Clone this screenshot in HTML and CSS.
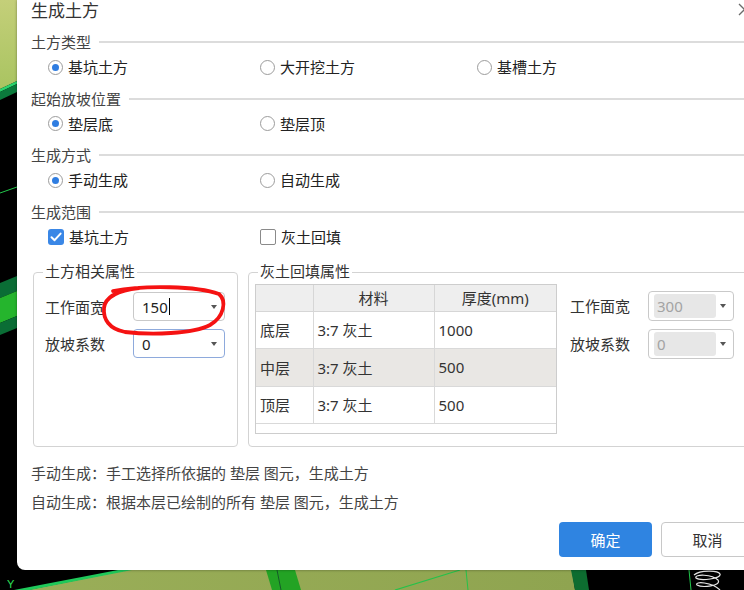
FILE: index.html
```html
<!DOCTYPE html>
<html lang="zh-CN">
<head>
    <meta charset="UTF-8">
    <meta name="viewport" content="width=device-width, initial-scale=1.0">
    <title>生成土方</title>
    <link rel="stylesheet" href="styles.css">
</head>
<body>
<div class="desktop">
    <!-- CAD scene behind the dialog -->
    <svg class="backdrop" width="744" height="590" viewBox="0 0 744 590">
        <defs>
            <linearGradient id="lime" x1="0" y1="0" x2="0" y2="1">
                <stop offset="0" stop-color="#c4cf79"/>
                <stop offset="1" stop-color="#a9c461"/>
            </linearGradient>
            <linearGradient id="olive" x1="0" y1="0" x2="1" y2="0">
                <stop offset="0" stop-color="#9aae58"/>
                <stop offset="1" stop-color="#8fa450"/>
            </linearGradient>
        </defs>
        <rect width="744" height="590" fill="#000"/>
        <polygon points="0,0 17,0 17,81 0,89" fill="url(#lime)"/>
        <polygon points="0,89 17,81 17,84 0,92" fill="#2ad36c"/>
        <polygon points="0,92 17,84 17,92 0,100" fill="#0b7a3c"/>
        <line x1="0" y1="193" x2="17" y2="187" stroke="#22c84c" stroke-width="1"/>
        <polygon points="0,283 17,276 17,291 0,298" fill="#0a6d35"/>
        <polygon points="0,298 17,291 17,316 0,323" fill="#25b52d"/>
        <polygon points="0,323 17,316 17,328 0,335" fill="#0a6d35"/>
        <polygon points="28,590 128,570 572,570 575,590" fill="url(#olive)"/>
        <polygon points="14,590 118,570 132,570 30,590" fill="#1fc95a"/>
        <polygon points="266,570 295,570 301,590 272,590" fill="#23a324"/>
        <line x1="277" y1="570" x2="281" y2="590" stroke="#145a2a" stroke-width="1"/>
        <line x1="395" y1="590" x2="460" y2="570" stroke="#24c24a" stroke-width="1.2"/>
        <line x1="466" y1="570" x2="468" y2="590" stroke="#24c24a" stroke-width="1"/>
        <polygon points="571,570 586,570 589,590 575,590" fill="#0d6d30"/>
        <line x1="689" y1="570" x2="691" y2="590" stroke="#22c84c" stroke-width="1"/>
        <path d="M694 575 C700 570, 718 570, 720 574 C722 579, 700 581, 696 578 C694 574, 712 574, 718 580 C722 586, 702 588, 697 585 C694 581, 712 582, 720 590" fill="none" stroke="#e6e6e6" stroke-width="1.2"/>
        <text x="7" y="588" fill="#2ee05a" font-size="11" font-family="Liberation Sans, sans-serif">Y</text>
    </svg>

    <div class="dialog">
        <div class="title-row">
            <span class="title">生成土方</span>
            <span class="close">
                <svg width="13" height="13" viewBox="0 0 13 13">
                    <path d="M1 1 L12 12 M1 12 L12 1" stroke="#6a6a6a" stroke-width="1.3" fill="none"/>
                </svg>
            </span>
        </div>

        <div class="section first">
            <div class="section-head"><span>土方类型</span></div>
            <div class="options">
                <label class="opt"><span class="radio on"></span>基坑土方</label>
                <label class="opt"><span class="radio"></span>大开挖土方</label>
                <label class="opt"><span class="radio"></span>基槽土方</label>
            </div>
        </div>

        <div class="section">
            <div class="section-head"><span>起始放坡位置</span></div>
            <div class="options">
                <label class="opt"><span class="radio on"></span>垫层底</label>
                <label class="opt"><span class="radio"></span>垫层顶</label>
            </div>
        </div>

        <div class="section">
            <div class="section-head"><span>生成方式</span></div>
            <div class="options">
                <label class="opt"><span class="radio on"></span>手动生成</label>
                <label class="opt"><span class="radio"></span>自动生成</label>
            </div>
        </div>

        <div class="section">
            <div class="section-head"><span>生成范围</span></div>
            <div class="options">
                <label class="opt">
                    <span class="check on">
                        <svg width="16" height="16" viewBox="0 0 16 16">
                            <path d="M3.5 8.2 L6.6 11.2 L12.6 4.6" stroke="#fff" stroke-width="2" fill="none" stroke-linecap="round" stroke-linejoin="round"/>
                        </svg>
                    </span>基坑土方
                </label>
                <label class="opt"><span class="check"></span>灰土回填</label>
            </div>
        </div>

        <div class="groups">
            <div class="group left">
                <div class="group-title">土方相关属性</div>
                <div class="field">
                    <span class="field-label">工作面宽</span>
                    <div class="combo">150<span class="caret"></span><span class="arrow"></span></div>
                </div>
                <div class="field second">
                    <span class="field-label">放坡系数</span>
                    <div class="combo focus">0<span class="arrow"></span></div>
                </div>
                <!-- red hand-drawn mark over the first input -->
                <svg class="mark" width="205" height="175" viewBox="0 0 205 175">
                    <path d="M80 19 C112 13, 164 14, 186 22 C194 29, 191 45, 177 53 C160 62, 118 63, 92 60 C76 57, 70 47, 71 36 C72 26, 81 19, 106 16" fill="none" stroke="#f51212" stroke-width="3.8" stroke-linecap="round"/>
                </svg>
            </div>

            <div class="group right">
                <div class="group-title">灰土回填属性</div>
                <div class="fill-body">
                    <div class="grid-box">
                        <table class="grid">
                            <tr>
                                <th class="c1"></th>
                                <th class="c2">材料</th>
                                <th>厚度(mm)</th>
                            </tr>
                            <tr>
                                <td>底层</td>
                                <td>3:7 灰土</td>
                                <td>1000</td>
                            </tr>
                            <tr class="shade">
                                <td>中层</td>
                                <td>3:7 灰土</td>
                                <td>500</td>
                            </tr>
                            <tr>
                                <td>顶层</td>
                                <td>3:7 灰土</td>
                                <td>500</td>
                            </tr>
                        </table>
                    </div>
                    <div class="side">
                        <div class="field">
                            <span class="field-label small">工作面宽</span>
                            <div class="combo disabled"><span class="value">300</span><span class="arrow"></span></div>
                        </div>
                        <div class="field second">
                            <span class="field-label small">放坡系数</span>
                            <div class="combo disabled"><span class="value">0</span><span class="arrow"></span></div>
                        </div>
                    </div>
                </div>
            </div>
        </div>

        <p class="note">手动生成：手工选择所依据的 垫层 图元，生成土方</p>
        <p class="note second">自动生成：根据本层已绘制的所有 垫层 图元，生成土方</p>

        <div class="buttons">
            <button class="btn ok">确定</button>
            <button class="btn cancel">取消</button>
        </div>
    </div>
</div>
</body>
</html>
```

FILE: styles.css
```css
* {
    margin: 0px;
    padding: 0px;
    box-sizing: border-box;
}

body {
    font-family: "Noto Sans", "Noto Sans CJK SC", sans-serif;
    color: #333;
    overflow: hidden;
}

.desktop {
    position: relative;
    width: 744px;
    height: 590px;
    overflow: hidden;
    background-color: #000;
}

.backdrop {
    position: absolute;
    left: 0;
    top: 0;
}

/* Dialog */

.dialog {
    position: relative;
    margin-left: 17px;
    width: 727px;
    height: 570px;
    padding-left: 14px;
    background-color: #fff;
    border-bottom-left-radius: 8px;
    box-shadow: 0 0 3px rgba(0, 0, 0, 0.4);
    overflow: hidden;
}

.title-row {
    display: flex;
    align-items: center;
    height: 21px;
}

.title {
    font-size: 17px;
    line-height: 21px;
    color: #333;
}

.close {
    margin-left: auto;
    width: 6px;
    height: 13px;
    margin-top: -2px;
    overflow: hidden;
}

.close svg {
    display: block;
}

/* Sections */

.section {
    margin-top: 11.5px;
}

.section.first {
    margin-top: 11px;
}

.section-head {
    display: flex;
    align-items: center;
    gap: 8px;
    height: 20px;
    font-size: 15px;
    line-height: 20px;
    color: #444;
}

.section-head::after {
    content: '';
    flex: 1;
    height: 2px;
    background-color: #dcdcdc;
}

.options {
    display: grid;
    grid-template-columns: 212px 217px auto;
    margin-top: 5px;
    padding-left: 17px;
    height: 20px;
}

.opt {
    display: flex;
    align-items: center;
    gap: 5px;
    font-size: 15px;
    line-height: 20px;
    color: #222;
}

.radio {
    display: flex;
    align-items: center;
    justify-content: center;
    width: 15px;
    height: 15px;
    border: 1px solid #9c9c9c;
    border-radius: 50%;
    background-color: #fff;
}

.radio.on::after {
    content: '';
    width: 7px;
    height: 7px;
    border-radius: 50%;
    background-color: #2f7de1;
}

.check {
    width: 16px;
    height: 16px;
    border: 1px solid #8a8a8a;
    border-radius: 2px;
    background-color: #fff;
}

.check.on {
    border: none;
    border-radius: 3px;
    background-color: #3a87e6;
}

.check svg {
    display: block;
}

/* Group boxes */

.groups {
    display: flex;
    gap: 10px;
    margin-top: 25.5px;
    margin-left: 2px;
}

.group {
    position: relative;
    height: 175px;
    border: 1px solid #d3d3d3;
    border-radius: 4px;
    flex-shrink: 0;
}

.group.left {
    width: 205px;
    padding: 0 11px;
}

.group.right {
    width: 520px;
    padding: 0 6px;
}

.group-title {
    width: fit-content;
    margin: -12px 0 0 -2px;
    padding: 0 2px;
    background-color: #fff;
    font-size: 15px;
    line-height: 20px;
    color: #333;
}

.group.right .group-title {
    margin-left: 3px;
}

.field {
    display: flex;
    align-items: center;
    margin-top: 11px;
}

.field.second {
    margin-top: 8px;
}

.field-label {
    width: 88px;
    font-size: 15px;
    line-height: 20px;
    color: #333;
}

.field-label.small {
    width: 78px;
}

.combo {
    display: flex;
    align-items: center;
    width: 92px;
    height: 29px;
    padding: 0 7px 0 8px;
    border: 1px solid #c9c9c9;
    border-radius: 4px;
    background-color: #fff;
    font-size: 15px;
    color: #222;
}

.combo.focus {
    border-color: #8eaadc;
}

.caret {
    width: 1px;
    height: 17px;
    margin-left: 1px;
    background-color: #000;
}

.arrow {
    margin-left: auto;
    width: 0;
    height: 0;
    border-left: 3px solid transparent;
    border-right: 3px solid transparent;
    border-top: 4px solid #555;
}

.combo.disabled {
    width: 86px;
    height: 30px;
    padding: 2px 7px 2px 5px;
}

.combo.disabled .value {
    display: flex;
    align-items: center;
    width: 62px;
    height: 100%;
    padding-left: 3px;
    border-radius: 3px;
    background-color: #e7e7e7;
    color: #a3a3a3;
}

.mark {
    position: absolute;
    left: -1px;
    top: -1px;
    pointer-events: none;
}

/* Table */

.fill-body {
    display: flex;
    margin-top: 3px;
}

.grid-box {
    width: 302px;
    height: 150px;
    border: 1px solid #cdcdcd;
    flex-shrink: 0;
}

.grid {
    width: 100%;
    border-collapse: collapse;
    font-size: 15px;
    color: #333;
}

.grid th {
    height: 26px;
    font-weight: normal;
    background-color: #eeeeee;
    border-right: 1px solid #d6d6d6;
    border-bottom: 1px solid #d6d6d6;
}

.grid td {
    height: 37.5px;
    padding: 0 4px;
    text-align: left;
    border-right: 1px solid #d9d9d9;
    border-bottom: 1px solid #d9d9d9;
}

.grid th:last-child,
.grid td:last-child {
    border-right: none;
}

.grid .c1 {
    width: 57px;
}

.grid .c2 {
    width: 121px;
}

.grid tr.shade td {
    background-color: #e9e7e4;
}

.side {
    margin-left: 13px;
}

.side .field {
    margin-top: 7px;
}

.side .field.second {
    margin-top: 8px;
}

/* Footer */

.note {
    margin-top: 16px;
    font-size: 15px;
    line-height: 20px;
    color: #444;
}

.note.second {
    margin-top: 9px;
}

.buttons {
    display: flex;
    gap: 9px;
    margin-top: 10px;
    padding-left: 528px;
}

.btn {
    flex-shrink: 0;
    width: 93px;
    height: 35px;
    border-radius: 4px;
    font-family: inherit;
    font-size: 15px;
    cursor: pointer;
}

.ok {
    border: none;
    color: #fff;
    background-color: #2f84e1;
}

.cancel {
    border: 1px solid #c8c8c8;
    color: #333;
    background-color: #fff;
}
```
